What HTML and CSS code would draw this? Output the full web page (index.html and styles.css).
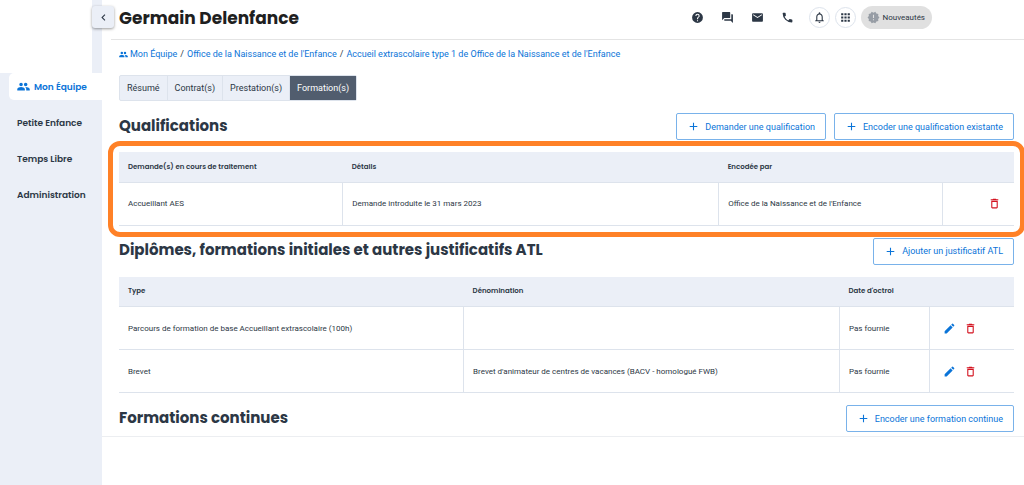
FILE: index.html
```html
<!DOCTYPE html>
<html lang="fr">
<head>
<meta charset="utf-8">
<meta name="viewport" content="width=device-width, initial-scale=1">
<title>Germain Delenfance – Formation(s)</title>
<link rel="stylesheet" href="styles.css">
</head>
<body>
<svg class="sprite" aria-hidden="true">
  <symbol id="i-people" viewBox="0 0 24 24"><path d="M7.500 11.500a3.300 3.300 0 1 0 0-6.600 3.300 3.300 0 0 0 0 6.600zM16 11.500a3.300 3.300 0 1 0 0-6.600 3.300 3.300 0 0 0 0 6.600zM7.500 13c-2.500 0-7 1.250-7 3.800V19.500h14v-2.700c0-2.550-4.500-3.800-7-3.800zM16 13c-.3 0-.6 0-.9.050 1.200.850 1.900 2.100 1.900 3.750v2.700h6.500v-2.700c0-2.550-5-3.800-7.500-3.800z"/></symbol>
  <symbol id="i-left" viewBox="0 0 24 24"><path d="M15.41 7.41 14 6l-6 6 6 6 1.41-1.41L10.83 12z"/></symbol>
  <symbol id="i-help" viewBox="0 0 24 24"><path d="M12 2a10 10 0 1 0 0 20 10 10 0 0 0 0-20zm1 17h-2v-2h2v2zm2.070-7.750-.9.920C13.450 12.900 13 13.500 13 15h-2v-.5c0-1.100.450-2.100 1.170-2.830l1.240-1.260c.370-.360.590-.860.590-1.410a2 2 0 1 0-4 0H8a4 4 0 1 1 8 0c0 .880-.360 1.680-.930 2.250z"/></symbol>
  <symbol id="i-forum" viewBox="0 0 24 24"><path d="M21 6h-2v9H6v2c0 .55.45 1 1 1h11l4 4V7c0-.55-.45-1-1-1zm-4 6V3c0-.55-.45-1-1-1H3c-.55 0-1 .45-1 1v14l4-4h10c.55 0 1-.45 1-1z"/></symbol>
  <symbol id="i-mail" viewBox="0 0 24 24"><path d="M20 4H4c-1.1 0-2 .9-2 2v12c0 1.1.9 2 2 2h16c1.1 0 2-.9 2-2V6c0-1.1-.9-2-2-2zm0 4-8 5-8-5V6l8 5 8-5v2z"/></symbol>
  <symbol id="i-phone" viewBox="0 0 24 24"><path d="M6.62 10.79a15.15 15.15 0 0 0 6.59 6.59l2.2-2.2c.27-.27.67-.36 1.02-.24 1.12.37 2.33.57 3.57.57.55 0 1 .45 1 1V20c0 .55-.45 1-1 1A17 17 0 0 1 3 4c0-.55.45-1 1-1h3.5c.55 0 1 .45 1 1 0 1.25.2 2.45.57 3.57.11.35.03.74-.25 1.02z"/></symbol>
  <symbol id="i-bell" viewBox="0 0 24 24"><path d="M12 22c1.1 0 2-.9 2-2h-4a2 2 0 0 0 2 2zm6-6v-5c0-3.07-1.63-5.64-4.5-6.32V4a1.5 1.5 0 0 0-3 0v.68C7.64 5.36 6 7.92 6 11v5l-2 2v1h16v-1l-2-2zm-2 1H8v-6c0-2.48 1.51-4.5 4-4.5s4 2.02 4 4.5v6z"/></symbol>
  <symbol id="i-apps" viewBox="0 0 24 24"><path d="M4 8h4V4H4v4zm6 12h4v-4h-4v4zm-6 0h4v-4H4v4zm0-6h4v-4H4v4zm6 0h4v-4h-4v4zm6-10v4h4V4h-4zm-6 4h4V4h-4v4zm6 6h4v-4h-4v4zm0 6h4v-4h-4v4z"/></symbol>
  <symbol id="i-new" viewBox="0 0 24 24"><path d="m23 12-2.44-2.78.34-3.68-3.61-.82-1.89-3.18L12 3 8.6 1.54 6.71 4.72l-3.61.81.34 3.68L1 12l2.44 2.78-.34 3.69 3.61.82 1.89 3.18L12 21l3.4 1.46 1.89-3.18 3.61-.82-.34-3.68L23 12zm-10 5h-2v-2h2v2zm0-4h-2V7h2v6z"/></symbol>
  <symbol id="i-plus" viewBox="0 0 24 24"><path d="M19 13h-6v6h-2v-6H5v-2h6V5h2v6h6z"/></symbol>
  <symbol id="i-trash" viewBox="0 0 24 24"><path d="M6 19c0 1.1.9 2 2 2h8c1.1 0 2-.9 2-2V7H6v12zM8 9h8v10H8V9zm7.5-5-1-1h-5l-1 1H5v2h14V4z"/></symbol>
  <symbol id="i-edit" viewBox="0 0 24 24"><path d="M3 17.25V21h3.75L17.81 9.94l-3.75-3.75L3 17.25zM20.71 7.04a1 1 0 0 0 0-1.41l-2.34-2.34a1 1 0 0 0-1.41 0l-1.83 1.83 3.75 3.75 1.83-1.83z"/></symbol>
</svg>
<div class="app">
  <aside class="sidebar">
    <div class="brand"></div>
    <button class="collapse" type="button" aria-label="Réduire le menu"><svg class="icon"><use href="#i-left"/></svg></button>
    <nav class="nav">
      <a class="nav-link active" href="#"><svg class="icon"><use href="#i-people"/></svg>Mon Équipe</a>
      <a class="nav-link" href="#">Petite Enfance</a>
      <a class="nav-link" href="#">Temps Libre</a>
      <a class="nav-link" href="#">Administration</a>
    </nav>
  </aside>
  <div class="content">
    <header class="topbar">
      <h1 class="page-title">Germain Delenfance</h1>
      <div class="tools">
        <div class="links">
          <button class="tool" type="button" aria-label="Aide"><svg class="icon"><use href="#i-help"/></svg></button>
          <button class="tool" type="button" aria-label="Forum"><svg class="icon"><use href="#i-forum"/></svg></button>
          <button class="tool" type="button" aria-label="Messages"><svg class="icon"><use href="#i-mail"/></svg></button>
          <button class="tool" type="button" aria-label="Téléphone"><svg class="icon"><use href="#i-phone"/></svg></button>
        </div>
        <button class="tool round" type="button" aria-label="Notifications"><svg class="icon"><use href="#i-bell"/></svg></button>
        <button class="tool round" type="button" aria-label="Applications"><svg class="icon"><use href="#i-apps"/></svg></button>
        <button class="news" type="button"><svg class="icon"><use href="#i-new"/></svg>Nouveautés</button>
      </div>
    </header>
    <main class="main">
      <nav class="breadcrumb" aria-label="Fil d'Ariane">
        <a href="#"><svg class="icon crumb-icon"><use href="#i-people"/></svg>Mon Équipe</a>
        <span>/</span>
        <a href="#">Office de la Naissance et de l'Enfance</a>
        <span>/</span>
        <a href="#">Accueil extrascolaire type 1 de Office de la Naissance et de l'Enfance</a>
      </nav>
      <div class="tabs">
        <button class="tab" type="button">Résumé</button>
        <button class="tab" type="button">Contrat(s)</button>
        <button class="tab" type="button">Prestation(s)</button>
        <button class="tab selected" type="button">Formation(s)</button>
      </div>
      <section class="section">
        <div class="section-head">
          <h2 class="section-title">Qualifications</h2>
          <div class="actions">
            <button class="btn" type="button"><svg class="icon"><use href="#i-plus"/></svg>Demander une qualification</button>
            <button class="btn" type="button"><svg class="icon"><use href="#i-plus"/></svg>Encoder une qualification existante</button>
          </div>
        </div>
        <div class="highlight">
          <table class="table">
            <colgroup><col class="c-quarter"><col class="c-wide"><col class="c-quarter"><col></colgroup>
            <thead><tr><th>Demande(s) en cours de traitement</th><th>Détails</th><th>Encodée par</th><th></th></tr></thead>
            <tbody>
              <tr><td>Accueillant AES</td><td>Demande introduite le 31 mars 2023</td><td>Office de la Naissance et de l'Enfance</td>
                <td><div class="row-actions end"><button class="act delete" type="button" aria-label="Supprimer"><svg class="icon"><use href="#i-trash"/></svg></button></div></td></tr>
            </tbody>
          </table>
        </div>
      </section>
      <section class="section">
        <div class="section-head">
          <h2 class="section-title">Diplômes, formations initiales et autres justificatifs ATL</h2>
          <button class="btn" type="button"><svg class="icon"><use href="#i-plus"/></svg>Ajouter un justificatif ATL</button>
        </div>
        <table class="table">
          <colgroup><col><col class="c-wide"><col class="c-date"><col class="c-actions"></colgroup>
          <thead><tr><th>Type</th><th>Dénomination</th><th>Date d'octroi</th><th></th></tr></thead>
          <tbody>
            <tr><td>Parcours de formation de base Accueillant extrascolaire (100h)</td><td></td><td>Pas fournie</td>
              <td><div class="row-actions"><button class="act edit" type="button" aria-label="Modifier"><svg class="icon"><use href="#i-edit"/></svg></button><button class="act delete" type="button" aria-label="Supprimer"><svg class="icon"><use href="#i-trash"/></svg></button></div></td></tr>
            <tr><td>Brevet</td><td>Brevet d'animateur de centres de vacances (BACV - homologué FWB)</td><td>Pas fournie</td>
              <td><div class="row-actions"><button class="act edit" type="button" aria-label="Modifier"><svg class="icon"><use href="#i-edit"/></svg></button><button class="act delete" type="button" aria-label="Supprimer"><svg class="icon"><use href="#i-trash"/></svg></button></div></td></tr>
          </tbody>
        </table>
      </section>
      <section class="section">
        <div class="section-head">
          <h2 class="section-title">Formations continues</h2>
          <button class="btn" type="button"><svg class="icon"><use href="#i-plus"/></svg>Encoder une formation continue</button>
        </div>
      </section>
    </main>
  </div>
</div>
</body>
</html>
```
FILE: styles.css
```css
:root {
  --blue: #0a74d8;
  --ink: #2c3745;
  --pale: #ebeff7;
  --line: #dde3ec;
  --heading: Poppins, Inter, sans-serif;
}
* { box-sizing: border-box; }
body { margin: 0; background: #fff; color: var(--ink); font-family: Roboto, sans-serif; font-size: 9px; }
button { margin: 0; padding: 0; border: 0; background: none; font: inherit; color: inherit; cursor: pointer; }
a { color: var(--blue); text-decoration: none; }
.sprite { display: none; }
.icon { display: block; flex: none; width: 13px; height: 13px; fill: currentColor; }

.app { display: flex; min-height: 100vh; }
.sidebar { position: relative; flex: none; width: 102px; background: var(--pale); }
.brand { height: 73px; margin-right: 10px; background: #fff; }
.collapse {
  position: absolute; top: 6px; right: -12px; display: grid; place-items: center;
  width: 22px; height: 22px; border-radius: 3px; background: var(--pale); box-shadow: 0 1px 3px rgba(0, 0, 0, .4);
}
.nav { display: flex; flex-direction: column; gap: 9px; padding-left: 9px; }
.nav-link {
  display: flex; align-items: center; gap: 4px; height: 27px; padding-left: 8px;
  border-radius: 5px 0 0 5px; color: var(--ink); font: 600 9px/12px var(--heading);
}
.nav-link.active { background: #fff; color: var(--blue); }

.content { flex: 1; min-width: 0; }
.topbar {
  display: flex; align-items: center; justify-content: space-between; height: 40px;
  margin-left: 9px; padding: 0 92px 4px 8px; border-bottom: 1px solid #e4e4e4;
}
.page-title { margin: 0; color: #1f1f1f; font: 700 17px/24px var(--heading); }
.tools { display: flex; align-items: center; gap: 5px; }
.links { display: flex; gap: 5px; margin-right: 4px; }
.tool { display: grid; place-items: center; width: 25px; height: 22px; }
.tool.round { width: 21px; height: 21px; border: 1px solid var(--line); border-radius: 50%; }
.news {
  display: flex; align-items: center; gap: 3px; height: 23px; padding: 0 7px 0 6px;
  border-radius: 12px; background: #e0e0e0; font-size: 8px;
}
.news .icon { color: #979da5; }

.main { padding: 8px 10px 4px 17px; border-bottom: 1px solid #eceef1; }
.breadcrumb { display: flex; gap: 3px; line-height: 12px; }
.breadcrumb a { display: flex; align-items: center; gap: 2px; }
.crumb-icon { width: 9px; height: 9px; }
.tabs { display: flex; width: max-content; margin-top: 15px; border: 1px solid var(--line); border-radius: 2px; background: var(--pale); }
.tab { height: 24px; padding: 0 7px; border-right: 1px solid var(--line); }
.tab.selected { border-right: 0; background: #515d6e; color: #fff; }

.section { margin-top: 12px; }
.section-head { display: flex; align-items: center; justify-content: space-between; }
.section-title { margin: 0; padding-bottom: 2px; font: 700 15px/24px var(--heading); }
.actions { display: flex; gap: 8px; }
.btn {
  display: flex; align-items: center; gap: 5px; height: 27px; padding: 0 10px;
  border: 1px solid #79b2ea; border-radius: 2px; color: var(--blue);
}
.table { width: 100%; margin-top: 12px; border-collapse: collapse; table-layout: fixed; font-size: 8px; }
.c-quarter { width: 25%; }
.c-wide { width: 42%; }
.c-date { width: 10%; }
.c-actions { width: 85px; }
.table th, .table td { padding: 0 8px 0 9px; border-bottom: 1px solid var(--line); text-align: left; }
.table th { height: 30px; background: var(--pale); font: 600 7px/10px var(--heading); }
.table td { height: 43px; border-right: 1px solid var(--line); }
.table td:last-child { border-right: 0; }
.row-actions { display: flex; gap: 8px; padding-left: 4px; }
.row-actions.end { justify-content: flex-end; padding-right: 5px; }
.act { display: block; }
.edit { color: var(--blue); }
.delete { color: #d3121f; }
.highlight { position: relative; }
.highlight::after {
  content: ""; position: absolute; inset: -11px; border: 5px solid #ff8127;
  border-radius: 12px; pointer-events: none;
}
```
